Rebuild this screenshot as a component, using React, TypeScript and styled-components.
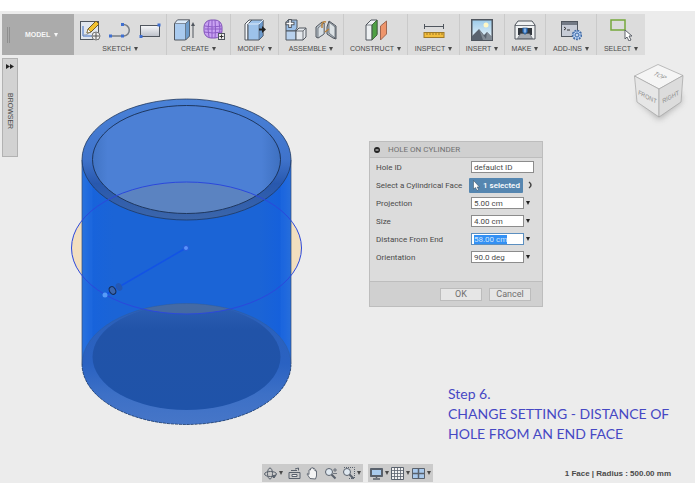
import React, { useEffect, useRef } from "react";
import styled, { createGlobalStyle } from "styled-components";

const GlobalStyle = createGlobalStyle`
  * { box-sizing: border-box; }
  body { margin: 0; background: #fff; font-family: "Liberation Sans", Arial, sans-serif; color: #4a4a4a; }
  button, input { font: inherit; color: inherit; margin: 0; }
  svg { flex: none; }
`;

const Page = styled.div`
  display: flex;
  min-height: 100vh;
  padding: 11px 0;
`;

const Workspace = styled.main`
  flex: 1;
  display: flex;
  flex-direction: column;
  padding-top: 3px;
  background: #ececec;
`;

const Toolbar = styled.header`
  display: flex;
  align-self: flex-start;
  height: 41px;
  margin-left: 2px;
  background: #dcdcdc;
`;

const ModelButton = styled.button`
  display: flex;
  align-items: center;
  gap: 15px;
  width: 72px;
  padding: 0 5px;
  border: 0;
  background: #ababab;
  color: #f6f6f6;
  font-size: 7px;
  font-weight: bold;
`;

const Grip = styled.span`
  width: 3px;
  height: 16px;
  border: solid #8f8f8f;
  border-width: 0 1px;
`;

const ModelLabel = styled.span`
  display: flex;
  align-items: center;
  gap: 4px;
`;

const ToolGroup = styled.button<{ $width: number }>`
  display: flex;
  flex-direction: column;
  align-items: center;
  width: ${(p) => p.$width}px;
  padding: 5px 0 0;
  border: 0;
  border-right: 1px solid #cacaca;
  background: none;
  font-size: 7px;
  line-height: 15px;
  white-space: nowrap;
  &:last-child { border-right: 0; }
`;

const ToolIcons = styled.span`
  display: flex;
  gap: 8px;
`;

const ToolLabel = styled.span`
  display: flex;
  align-items: center;
  gap: 3px;
`;

const Caret = styled.i`
  border: solid transparent;
  border-width: 4px 2px 0;
  border-top-color: currentColor;
`;

const Canvas = styled.section`
  flex: 1;
  display: flex;
  align-items: flex-start;
`;

const BrowserTab = styled.button`
  display: flex;
  flex-direction: column;
  align-items: center;
  gap: 24px;
  width: 16px;
  height: 99px;
  margin: 3px 0 0 2px;
  padding: 5px 0;
  border: 1px solid #b2b2b2;
  background: #d2d2d2;
  font-size: 7px;
`;

const BrowserLabel = styled.span`
  writing-mode: vertical-rl;
  line-height: 12px;
`;

const Scene = styled.svg`
  flex: none;
  margin: 42px 0 0 52px;
`;

const SidePane = styled.div`
  flex: 1;
  display: flex;
  flex-direction: column;
  padding-left: 65px;
`;

const PaneTop = styled.div`
  display: flex;
  justify-content: space-between;
  align-items: flex-start;
  padding-right: 7px;
`;

const Dialog = styled.form`
  width: 174px;
  margin-top: 86px;
  border: 1px solid #bdbdbd;
  background: #dcdcdc;
  font-family: Roboto, sans-serif;
  font-size: 8px;
`;

const DialogTitle = styled.h2`
  display: flex;
  align-items: center;
  gap: 8px;
  height: 16px;
  margin: 0;
  padding: 0 4px;
  border-bottom: 1px solid #bdbdbd;
  background: #d0d0d0;
  color: #707070;
  font-size: 8px;
  font-weight: normal;
`;

const Fields = styled.div`
  padding: 0 6px 15px;
`;

const Field = styled.div`
  display: grid;
  grid-template-columns: 95px 53px 1fr;
  align-items: center;
  height: 18px;
`;

const TextBox = styled.input<{ $wide?: boolean }>`
  grid-column: ${(p) => (p.$wide ? "2 / 4" : "2")};
  width: ${(p) => (p.$wide ? "63px" : "53px")};
  height: 12px;
  padding: 0 2px;
  border: 1px solid #8c8c8c;
  background: #fff;
  line-height: 10px;
  &:focus { outline: 0; border-color: #5b8fc0; }
  &::selection { background: #3390f4; color: #cfe4fb; }
`;

const MenuButton = styled.button`
  justify-self: start;
  display: flex;
  padding: 3px 2px;
  border: 0;
  background: none;
  color: #222;
`;

const Selected = styled.button`
  display: flex;
  align-items: center;
  gap: 3px;
  width: 54px;
  height: 15px;
  margin-left: -2px;
  padding: 0 4px;
  border: 0;
  border-radius: 1px;
  background: #5586b0;
  color: #fff;
  font-weight: 500;
  white-space: nowrap;
`;

const Actions = styled.div`
  display: flex;
  justify-content: flex-end;
  gap: 7px;
  padding: 6px 11px 5px;
  border-top: 1px solid #bdbdbd;
  background: #d0d0d0;
`;

const ActionButton = styled.button`
  width: 42px;
  height: 13px;
  padding: 0;
  border: 1px solid #bcbcbc;
  background: #e6e6e6;
  color: #707070;
  font-size: 9px;
  line-height: 11px;
`;

const ViewCube = styled.svg`
  margin-top: 5px;
`;

const Caption = styled.p`
  margin: 77px 0 0 79px;
  color: #4648c4;
  font-family: Lato, sans-serif;
  font-size: 14px;
  line-height: 20px;
`;

const Footer = styled.footer`
  display: grid;
  grid-template-columns: 1fr auto 1fr;
  align-items: center;
  padding-bottom: 1px;
`;

const NavBars = styled.nav`
  grid-column: 2;
  display: flex;
  gap: 5px;
`;

const NavBar = styled.div<{ $gap: number }>`
  display: flex;
  align-items: center;
  gap: ${(p) => p.$gap}px;
  height: 18px;
  padding: 0 2px;
  background: #cbcbcb;
`;

const NavButton = styled.button`
  display: flex;
  align-items: center;
  gap: 2px;
  padding: 0;
  border: 0;
  background: none;
`;

const Status = styled.output`
  justify-self: end;
  padding-right: 24px;
  font-size: 8px;
  font-weight: bold;
  white-space: nowrap;
`;

const Icon = ({ children }: { children: React.ReactNode }) => (
  <svg width="22" height="22" viewBox="0 0 22 22" fill="none" stroke="#50565e" aria-hidden="true">
    {children}
  </svg>
);

const SketchIcon = () => (
  <Icon>
    <rect x="1.5" y="2.5" width="18" height="18" fill="#e2e7ee" />
    <path d="M4 7v10h9" stroke="#3c6cc4" />
    <path d="M4 16q6 0 9-5" stroke="#9aa6b8" />
    <path d="M17 2l3 3-8 8-4 1 1-4z" fill="#f2c230" stroke="#705c28" />
    <path d="M9 10l3 3-4 1z" fill="#fff" stroke="#705c28" strokeWidth=".6" />
    <circle cx="17" cy="17" r="4" fill="#eee" stroke="#777" />
    <path d="M17 13.500v7M13.500 17h7" stroke="#555" />
  </Icon>
);
const LineIcon = () => (
  <Icon>
    <path d="M2 17h13a5.500 5.500 0 0 0-1-11.500" stroke="#777d85" strokeWidth="1.500" />
    <path d="M0 15.500h3v3H0zM12 15.500h3v3h-3zM12 4h3v3h-3z" fill="#3f6fd0" stroke="none" />
  </Icon>
);
const RectIcon = () => (
  <Icon>
    <defs><linearGradient id="plate" x2="0" y2="1"><stop stopColor="#f7f8fa" /><stop offset="1" stopColor="#bcc0c9" /></linearGradient></defs>
    <rect x="1.500" y="6.500" width="19" height="11" fill="url(#plate)" />
    <path d="M18.500 4.500h3v3h-3zM.500 16h3v3h-3z" fill="#3f6fd0" stroke="none" />
  </Icon>
);
const ExtrudeIcon = () => (
  <Icon>
    <path d="M1.500 4.500l3-3.500h12v16l-4 4h-11z" fill="#aacbef" />
    <path d="M1.500 4.500h11l4-3.500h-12z" fill="#dcebfa" strokeWidth=".6" />
    <path d="M12.500 4.500V21l4-4V1z" fill="#6f9dcc" strokeWidth=".6" />
    <path d="M20 19V6" />
    <path d="M18 7l2-4 2 4z" fill="#50565e" stroke="none" />
  </Icon>
);
const FormIcon = () => (
  <Icon>
    <rect x="1" y="1" width="18" height="18" rx="7" fill="#c9a2f2" stroke="#7f50b5" />
    <path d="M6 2q-2 8 0 16M12 1q1 9 0 18M2 7q8 2 16 0M1 13q9 2 18 0M9 1v18M16 3q2 7 0 14M2 10h17" stroke="#8c5cc6" />
    <rect x="15.500" y="14.500" width="6" height="6" fill="#eee" />
    <path d="M18.500 15.500v4M16.500 17.500h4" stroke="#333" />
  </Icon>
);
const ModifyIcon = () => (
  <Icon>
    <path d="M1 5l4-4h3L4 5v16H1z" fill="#f2f5f8" />
    <path d="M4 5l4-4h11v16l-4 4H4z" fill="#9dc2ea" />
    <path d="M15 5v16l4-4V1z" fill="#6b9acd" strokeWidth=".6" />
    <path d="M4 5h11l4-4" stroke="#dceafa" />
    <path d="M15 10.500h4" stroke="#222" strokeWidth="2" />
    <path d="M18 7l4 3.500-4 3.500z" fill="#222" stroke="none" />
  </Icon>
);
const ComponentIcon = () => (
  <Icon>
    <path d="M1 3.500l2-2.500h9v8l-2 3H1z" fill="#9cc0e8" />
    <path d="M1 12h10v9H1z" fill="#b8d1ed" />
    <path d="M11 12l3-3h7v9l-3 3h-7z" fill="#e4e8ec" />
    <path d="M11 12h7l3-3M18 12v9" strokeWidth=".8" />
    <path d="M5 0v9M.5 4.500h9" stroke="#50565e" strokeWidth="3.500" />
    <path d="M5 1v7M1.500 4.500h7" stroke="#fff" strokeWidth="1.500" />
  </Icon>
);
const JointIcon = () => (
  <Icon>
    <path d="M1 8l6-5 2 1v11l-6 4-2-1z" fill="#b9c2ca" />
    <path d="M3 9l6-5v11l-6 4z" fill="#d8dfe4" strokeWidth=".7" />
    <path d="M12 8l2-6 7 5v13l-3-1-6-4z" fill="#aeb8c0" />
    <path d="M14 3l6 5v11l-6-5z" fill="#dce2e5" strokeWidth=".7" />
    <path d="M7 9V5q1-3 4-2M10 13l4-3" stroke="#b9833d" strokeWidth="1.500" />
  </Icon>
);
const PlaneIcon = () => (
  <Icon>
    <path d="M1 6l5-5h6v14l-5 6H1z" fill="#edf0f2" />
    <path d="M7 6l5-5v15l-5 5z" fill="#4fa044" stroke="#416c3b" />
    <path d="M1 6h6v15" strokeWidth=".7" />
    <path d="M15.500 7l6-5v13l-6 6z" fill="#ee956b" stroke="#9e6650" />
  </Icon>
);
const MeasureIcon = () => (
  <Icon>
    <path d="M1 7.500h20M1.500 5v5M20.500 5v5" />
    <rect x="1" y="13.500" width="20" height="5" fill="#f2bd3c" stroke="#9f7927" />
    <path d="M4 14v2M7 14v2M10 14v2M13 14v2M16 14v2M19 14v2" stroke="#9f7927" />
  </Icon>
);
const PictureIcon = () => (
  <Icon>
    <defs><linearGradient id="sky" x2="0" y2="1"><stop stopColor="#9ccbea" /><stop offset="1" stopColor="#eef6fa" /></linearGradient></defs>
    <rect x="1" y="1" width="20" height="20" fill="url(#sky)" />
    <circle cx="15" cy="6" r="2.500" fill="#fff7c5" stroke="none" />
    <path d="M1 17l7-7 5 6 3-3 5 5v3H1z" fill="#59626e" stroke="none" />
    <path d="M8 10l7 10 1-7 5 5v3h-9z" fill="#828b95" stroke="none" />
    <rect x=".500" y=".500" width="21" height="21" />
  </Icon>
);
const PrinterIcon = () => (
  <Icon>
    <path d="M1 6l3-4h14l3 4v14H1z" fill="#f0f2f3" />
    <path d="M1 6.500h20" strokeWidth=".8" />
    <path d="M4 9h14v7H4z" fill="#32373e" stroke="none" />
    <path d="M3.500 19.500l3-5h9l3 5z" fill="#a4a9af" strokeWidth=".6" />
    <path d="M8.500 9h5v4l-2.500 2.500L8.500 13z" fill="#397bc6" stroke="#244b78" strokeWidth=".6" />
    <path d="M11 9.500v4" stroke="#d4e7ff" />
  </Icon>
);
const ScriptIcon = () => (
  <Icon>
    <rect x="1.500" y="2.500" width="16" height="15" fill="#c7ccd6" />
    <path d="M2 3h15v3H2z" fill="#737a85" stroke="none" />
    <path d="M4 8l2 1.500L4 11M7 11h3" stroke="#333" />
    <circle cx="17" cy="16" r="4.500" fill="#bad2f2" stroke="#446da6" strokeDasharray="2 1" strokeWidth="1.500" />
    <path d="M17 12v8M13 16h8M14 13l6 6M20 13l-6 6" stroke="#4777b7" strokeWidth=".8" />
    <circle cx="17" cy="16" r="1.500" fill="#eef6ff" stroke="#446da6" strokeWidth=".8" />
  </Icon>
);
const SelectIcon = () => (
  <Icon>
    <rect x="1" y="1" width="14" height="10" stroke="#76a83b" strokeWidth="1.500" />
    <path d="M15 11v9l2-2 2 4 2-1-2-4h3z" fill="#fff" strokeWidth=".9" />
  </Icon>
);

const groups = [
  { label: "SKETCH", width: 93, icons: [SketchIcon, LineIcon, RectIcon] },
  { label: "CREATE", width: 64, icons: [ExtrudeIcon, FormIcon] },
  { label: "MODIFY", width: 48, icons: [ModifyIcon] },
  { label: "ASSEMBLE", width: 65, icons: [ComponentIcon, JointIcon] },
  { label: "CONSTRUCT", width: 64, icons: [PlaneIcon] },
  { label: "INSPECT", width: 52, icons: [MeasureIcon] },
  { label: "INSERT", width: 45, icons: [PictureIcon] },
  { label: "MAKE", width: 41, icons: [PrinterIcon] },
  { label: "ADD-INS", width: 51, icons: [ScriptIcon] },
  { label: "SELECT", width: 48, icons: [SelectIcon] },
];

const Cylinder = () => (
  <Scene width="234" height="330" viewBox="70 97 234 330" fill="none" role="img" aria-label="Hollow cylinder">
    <defs>
      <linearGradient id="wall">
        <stop stopColor="#2872dc" /><stop offset=".04" stopColor="#1763dc" />
        <stop offset=".15" stopColor="#1b64d6" /><stop offset=".85" stopColor="#1b64d6" />
        <stop offset=".96" stopColor="#1560dc" /><stop offset="1" stopColor="#256bd8" />
      </linearGradient>
      <linearGradient id="bore">
        <stop stopColor="#4174c4" /><stop offset=".08" stopColor="#4c80d5" />
        <stop offset=".9" stopColor="#4c80d5" /><stop offset="1" stopColor="#3e70c0" />
      </linearGradient>
      <linearGradient id="rim" x2="0" y2="1">
        <stop stopColor="#4a82d8" /><stop offset=".5" stopColor="#3f73cb" />
        <stop offset=".7" stopColor="#2858ae" /><stop offset="1" stopColor="#3c66aa" />
      </linearGradient>
      <linearGradient id="floor" x2="0" y2="1">
        <stop stopColor="#2c5fb4" /><stop offset=".25" stopColor="#2153a8" /><stop offset="1" stopColor="#1f53a9" />
      </linearGradient>
      <linearGradient id="base" x2="0" y2="1">
        <stop stopColor="#2c60b8" /><stop offset=".5" stopColor="#2a62c2" />
        <stop offset=".75" stopColor="#3d70c6" /><stop offset="1" stopColor="#4676c8" />
      </linearGradient>
      <clipPath id="boreClip"><ellipse cx="186.500" cy="159.500" rx="94" ry="54" /></clipPath>
      <clipPath id="floorClip"><ellipse cx="186.500" cy="364" rx="104.500" ry="60.500" /></clipPath>
    </defs>
    <ellipse cx="186.500" cy="248" rx="115" ry="66" fill="#f2dfbf" />
    <path d="M82 159.500V364a104.500 60.500 0 0 0 209 0V159.500z" fill="url(#wall)" />
    <path d="M82 159.500h10.500v205H82zM280.500 159.500H291v205h-10.500z" fill="#2b74e4" opacity=".3" />
    <ellipse cx="186.500" cy="364" rx="104.500" ry="60.500" fill="url(#base)" />
    <ellipse cx="186.500" cy="357" rx="94" ry="53" fill="url(#floor)" />
    <ellipse cx="186.500" cy="248" rx="115" ry="66" fill="#56739a" opacity=".6" clipPath="url(#floorClip)" />
    <path d="M82 364a104.500 60.500 0 0 0 209 0" stroke="#20395f" strokeDasharray="3 1" strokeWidth=".8" />
    <path d="M82 364a104.500 60.500 0 0 1 209 0" stroke="#345684" opacity=".5" strokeWidth=".6" />
    <path d="M82 160v204M291 160v204" stroke="#344b73" strokeWidth=".7" />
    <ellipse cx="186.500" cy="159.500" rx="104.500" ry="60.500" fill="url(#rim)" stroke="#20395f" strokeWidth=".8" />
    <ellipse cx="186.500" cy="159.500" rx="94" ry="54" fill="url(#bore)" />
    <ellipse cx="186.500" cy="248" rx="115" ry="66" fill="#5b83c1" clipPath="url(#boreClip)" />
    <ellipse cx="186.500" cy="159.500" rx="94" ry="54" stroke="#192f52" strokeWidth=".9" />
    <ellipse cx="186.500" cy="248" rx="115" ry="66" stroke="#2b48dc" />
    <path d="M105 295l81-47" stroke="#1353e5" strokeWidth="1.500" />
    <circle cx="186" cy="248" r="2.500" fill="#5b92fa" stroke="#2459d8" />
    <circle cx="105" cy="295" r="2.500" fill="#579bf8" />
    <ellipse cx="119" cy="287" rx="3" ry="4" fill="#2458b4" transform="rotate(-30 119 287)" />
    <ellipse cx="112.500" cy="290.500" rx="3" ry="4" fill="#3b66ad" stroke="#152c55" transform="rotate(-30 112.500 290.500)" />
  </Scene>
);

const Cube = () => (
  <ViewCube width="58" height="68" viewBox="630 60 58 68" role="img" aria-label="View cube">
    <defs><filter id="shade" x="-30%" y="-30%" width="160%" height="160%"><feGaussianBlur stdDeviation="3" /></filter></defs>
    <path d="M638 101l21 19 23-18-2-10h-40z" fill="#999" opacity=".7" filter="url(#shade)" />
    <g stroke="#a4a4a4" strokeWidth=".7" strokeLinejoin="round">
      <path d="M634.500 76L658 64.500 683 75.500 659 89z" fill="#f5f5f5" />
      <path d="M634.500 76L659 89v28l-22-15z" fill="#e6e6e6" />
      <path d="M683 75.500L659 89v28l22-15z" fill="#dcdcdc" />
    </g>
    <g fill="#8c8c8c" fontFamily="Liberation Sans, sans-serif" fontSize="6" textAnchor="middle">
      <text transform="translate(658 77) rotate(25) skewX(-30)">TOP</text>
      <text transform="translate(647 99) rotate(28) skewX(20)">FRONT</text>
      <text transform="translate(671 99) rotate(-28) skewX(-20)">RIGHT</text>
    </g>
  </ViewCube>
);

const NavIcon = ({ children }: { children: React.ReactNode }) => (
  <svg width="13" height="13" viewBox="0 0 13 13" fill="none" stroke="#59616c" aria-hidden="true">{children}</svg>
);

const magnifier = <><circle cx="5" cy="5" r="3.500" fill="#dfe8f0" /><path d="M7.500 7.500l4 4" strokeWidth="2" /></>;

const viewTools = [
  { label: "Orbit", menu: true, art: <><ellipse cx="6.500" cy="7" rx="6" ry="2.500" /><ellipse cx="6" cy="6.500" rx="2.500" ry="5.500" /><path d="M8 9l4-1-2 3z" fill="#59616c" /></> },
  { label: "Look at", art: <><path d="M1 5.500h11v6H1zM3 3.500h6M10.500 3.500V1L7 2" /><path d="M4 7.500h5v2H4z" fill="#eee" /></> },
  { label: "Pan", art: <path d="M4 11.500L1 7q0-1.500 2 .5V3q1-1 1.500 0V1.500q1-1 1.500 0V1q1-1 1.500 0v1q1-1 1.500 0v2q1.500-1 1.500 0v5l-1 3z" fill="#f4f4f4" strokeWidth=".9" /> },
  { label: "Zoom", art: <>{magnifier}<path d="M9 3h4M11 1v4M9 6.500h4" strokeWidth=".8" /></> },
  { label: "Zoom window", menu: true, art: <><path d="M2 .500h10.500v11H7" strokeDasharray="1 1" />{magnifier}</> },
];

const displayTools = [
  { label: "Display settings", art: <><path d="M.500 1.500h12v8H.500z" fill="#59616c" /><path d="M2 3h9v5H2z" fill="#a9cbed" stroke="none" /><path d="M6.500 9v2M3 12h7" strokeWidth="1.500" /></> },
  { label: "Grid and snaps", art: <><path d="M.500.500h12v12H.500z" fill="#f2f2f2" /><path d="M3.500 0v13M6.500 0v13M9.500 0v13M0 3.500h13M0 6.500h13M0 9.500h13" strokeWidth=".8" /></> },
  { label: "Viewports", art: <><path d="M.500 1.500h12v10H.500z" fill="#a9c9ec" /><path d="M6.500 2v9M1 6.500h11" strokeWidth="1.500" /></> },
];

const measures = [
  { id: "projection", label: "Projection", value: "5.00 cm" },
  { id: "size", label: "Size", value: "4.00 cm" },
  { id: "distance", label: "Distance From End", value: "58.00 cm" },
  { id: "orientation", label: "Orientation", value: "90.0 deg" },
];

const HoleDialog = () => {
  const distance = useRef<HTMLInputElement>(null);
  useEffect(() => {
    distance.current?.focus();
    distance.current?.select();
  }, []);
  return (
    <Dialog onSubmit={(e) => e.preventDefault()}>
      <DialogTitle>
        <svg width="6" height="6" viewBox="0 0 6 6" aria-hidden="true"><circle cx="3" cy="3" r="3" fill="#222" /><path d="M1.500 3h3" stroke="#eee" /></svg>
        HOLE ON CYLINDER
      </DialogTitle>
      <Fields>
        <Field>
          <label htmlFor="hole-id">Hole ID</label>
          <TextBox id="hole-id" $wide defaultValue="defaulct ID" />
        </Field>
        <Field>
          <label htmlFor="face">Select a Cylindrical Face</label>
          <Selected id="face" type="button">
            <svg width="7" height="11" viewBox="0 0 7 11" aria-hidden="true"><path d="M.5.500v8.500l2-1.500 1.500 3 1.500-1-1.500-2.500h2.500z" fill="#fff" stroke="#345" strokeWidth=".5" /></svg>
            1 selected
          </Selected>
          <MenuButton type="button" aria-label="Clear selection">
            <svg width="8" height="8" viewBox="0 0 8 8" fill="none" stroke="#444"><path d="M3 1q4 3 0 6" strokeWidth="1.500" /></svg>
          </MenuButton>
        </Field>
        {measures.map((m) => (
          <Field key={m.id}>
            <label htmlFor={m.id}>{m.label}</label>
            <TextBox id={m.id} ref={m.id === "distance" ? distance : undefined} defaultValue={m.value} />
            <MenuButton type="button" aria-label={`${m.label} options`}><Caret /></MenuButton>
          </Field>
        ))}
      </Fields>
      <Actions>
        <ActionButton type="submit">OK</ActionButton>
        <ActionButton type="button">Cancel</ActionButton>
      </Actions>
    </Dialog>
  );
};

export default function App() {
  return (
    <>
      <GlobalStyle />
      <Page>
        <Workspace>
          <Toolbar>
            <ModelButton>
              <Grip />
              <ModelLabel>MODEL <Caret /></ModelLabel>
            </ModelButton>
            {groups.map((g) => (
              <ToolGroup key={g.label} $width={g.width}>
                <ToolIcons>{g.icons.map((Art, i) => <Art key={i} />)}</ToolIcons>
                <ToolLabel>{g.label}<Caret /></ToolLabel>
              </ToolGroup>
            ))}
          </Toolbar>
          <Canvas>
            <BrowserTab>
              <svg width="8" height="5" viewBox="0 0 8 5" aria-hidden="true"><path d="M0 0l4 2.500L0 5zM4 0l4 2.500L4 5z" fill="#222" /></svg>
              <BrowserLabel>BROWSER</BrowserLabel>
            </BrowserTab>
            <Cylinder />
            <SidePane>
              <PaneTop>
                <HoleDialog />
                <Cube />
              </PaneTop>
              <Caption>
                Step 6.<br />CHANGE SETTING - DISTANCE OF<br />HOLE FROM AN END FACE
              </Caption>
            </SidePane>
          </Canvas>
          <Footer>
            <NavBars>
              <NavBar $gap={5}>
                {viewTools.map((t) => (
                  <NavButton key={t.label} aria-label={t.label}><NavIcon>{t.art}</NavIcon>{t.menu && <Caret />}</NavButton>
                ))}
              </NavBar>
              <NavBar $gap={2}>
                {displayTools.map((t) => (
                  <NavButton key={t.label} aria-label={t.label}><NavIcon>{t.art}</NavIcon><Caret /></NavButton>
                ))}
              </NavBar>
            </NavBars>
            <Status>1 Face | Radius : 500.00 mm</Status>
          </Footer>
        </Workspace>
      </Page>
    </>
  );
}
